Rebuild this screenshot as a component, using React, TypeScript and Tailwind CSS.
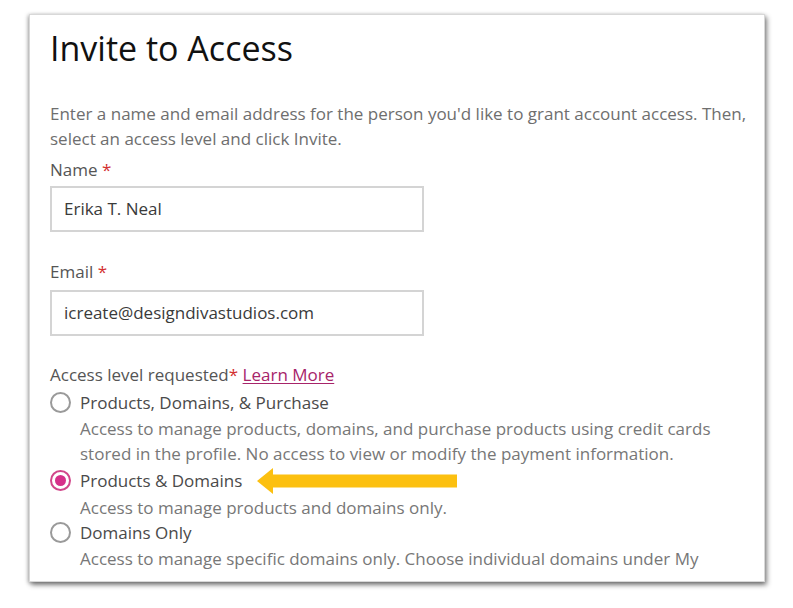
import React from "react";

function Radio({ checked }: { checked?: boolean }) {
  return checked ? (
    <span className="flex h-[21px] w-[21px] shrink-0 items-center justify-center rounded-full border-2 border-[#d1468a]">
      <span className="h-[11px] w-[11px] rounded-full bg-[#d6308a]" />
    </span>
  ) : (
    <span className="h-[21px] w-[21px] shrink-0 rounded-full border-2 border-[#9a9a9a]" />
  );
}

export default function App() {
  return (
    <div className="h-[608px] w-[793px] bg-white pl-[29px] pt-[14px]" style={{ fontFamily: '"Open Sans", sans-serif' }}>
      <div className="relative h-[568px] w-[736px] overflow-hidden border border-[#d8d8d8] bg-white pl-[20px] pr-[10px] shadow-[2px_3px_5px_rgba(0,0,0,0.45),-1px_1px_4px_rgba(0,0,0,0.3)]">
        <h1 className="mt-[10px] text-[34px] leading-[46px] text-[#111]">Invite to Access</h1>
        <p className="mt-[30px] text-[17px] leading-[25px] text-[#6e6e6e]">
          Enter a name and email address for the person you'd like to grant account access. Then, select an access level and click Invite.
        </p>
        <div className="mt-[8px] text-[17px] leading-[22px] text-[#555]">
          Name <span className="text-[#d32f2f]">*</span>
        </div>
        <div className="mt-[5px] flex h-[46px] w-[374px] items-center border-2 border-[#d4d4d4] px-[12px] text-[17px] text-[#3a3a3a]">
          Erika T. Neal
        </div>
        <div className="mt-[29px] text-[17px] leading-[22px] text-[#555]">
          Email <span className="text-[#d32f2f]">*</span>
        </div>
        <div className="mt-[7px] flex h-[46px] w-[374px] items-center border-2 border-[#d4d4d4] px-[12px] text-[17px] text-[#3a3a3a]">
          icreate@designdivastudios.com
        </div>
        <div className="mt-[28px] text-[17px] leading-[22px] text-[#555]">
          Access level requested<span className="text-[#d32f2f]">*</span>{" "}
          <span className="text-[#a7246a] underline decoration-1 underline-offset-2">Learn More</span>
        </div>
        <div className="mt-[4px] flex flex-col text-[17px] leading-[25.5px]">
          <div className="flex items-center gap-[9px]">
            <Radio />
            <span className="text-[#4a4a4a]">Products, Domains, &amp; Purchase</span>
          </div>
          <div className="pl-[30px] text-[#777]">
            Access to manage products, domains, and purchase products using credit cards stored in the profile. No access to view or modify the payment information.
          </div>
          <div className="flex items-center gap-[9px]">
            <Radio checked />
            <span className="text-[#4a4a4a]">Products &amp; Domains</span>
            <svg width="201" height="28" viewBox="0 0 201 28" className="ml-[6px]">
              <polygon points="0,14 16,1 16,7.5 200,7.5 200,20.5 16,20.5 16,27" fill="#fcc010" />
            </svg>
          </div>
          <div className="pl-[30px] text-[#777]">Access to manage products and domains only.</div>
          <div className="flex items-center gap-[9px]">
            <Radio />
            <span className="text-[#4a4a4a]">Domains Only</span>
          </div>
          <div className="pl-[30px] text-[#777]">
            Access to manage specific domains only. Choose individual domains under My
          </div>
        </div>
      </div>
    </div>
  );
}
